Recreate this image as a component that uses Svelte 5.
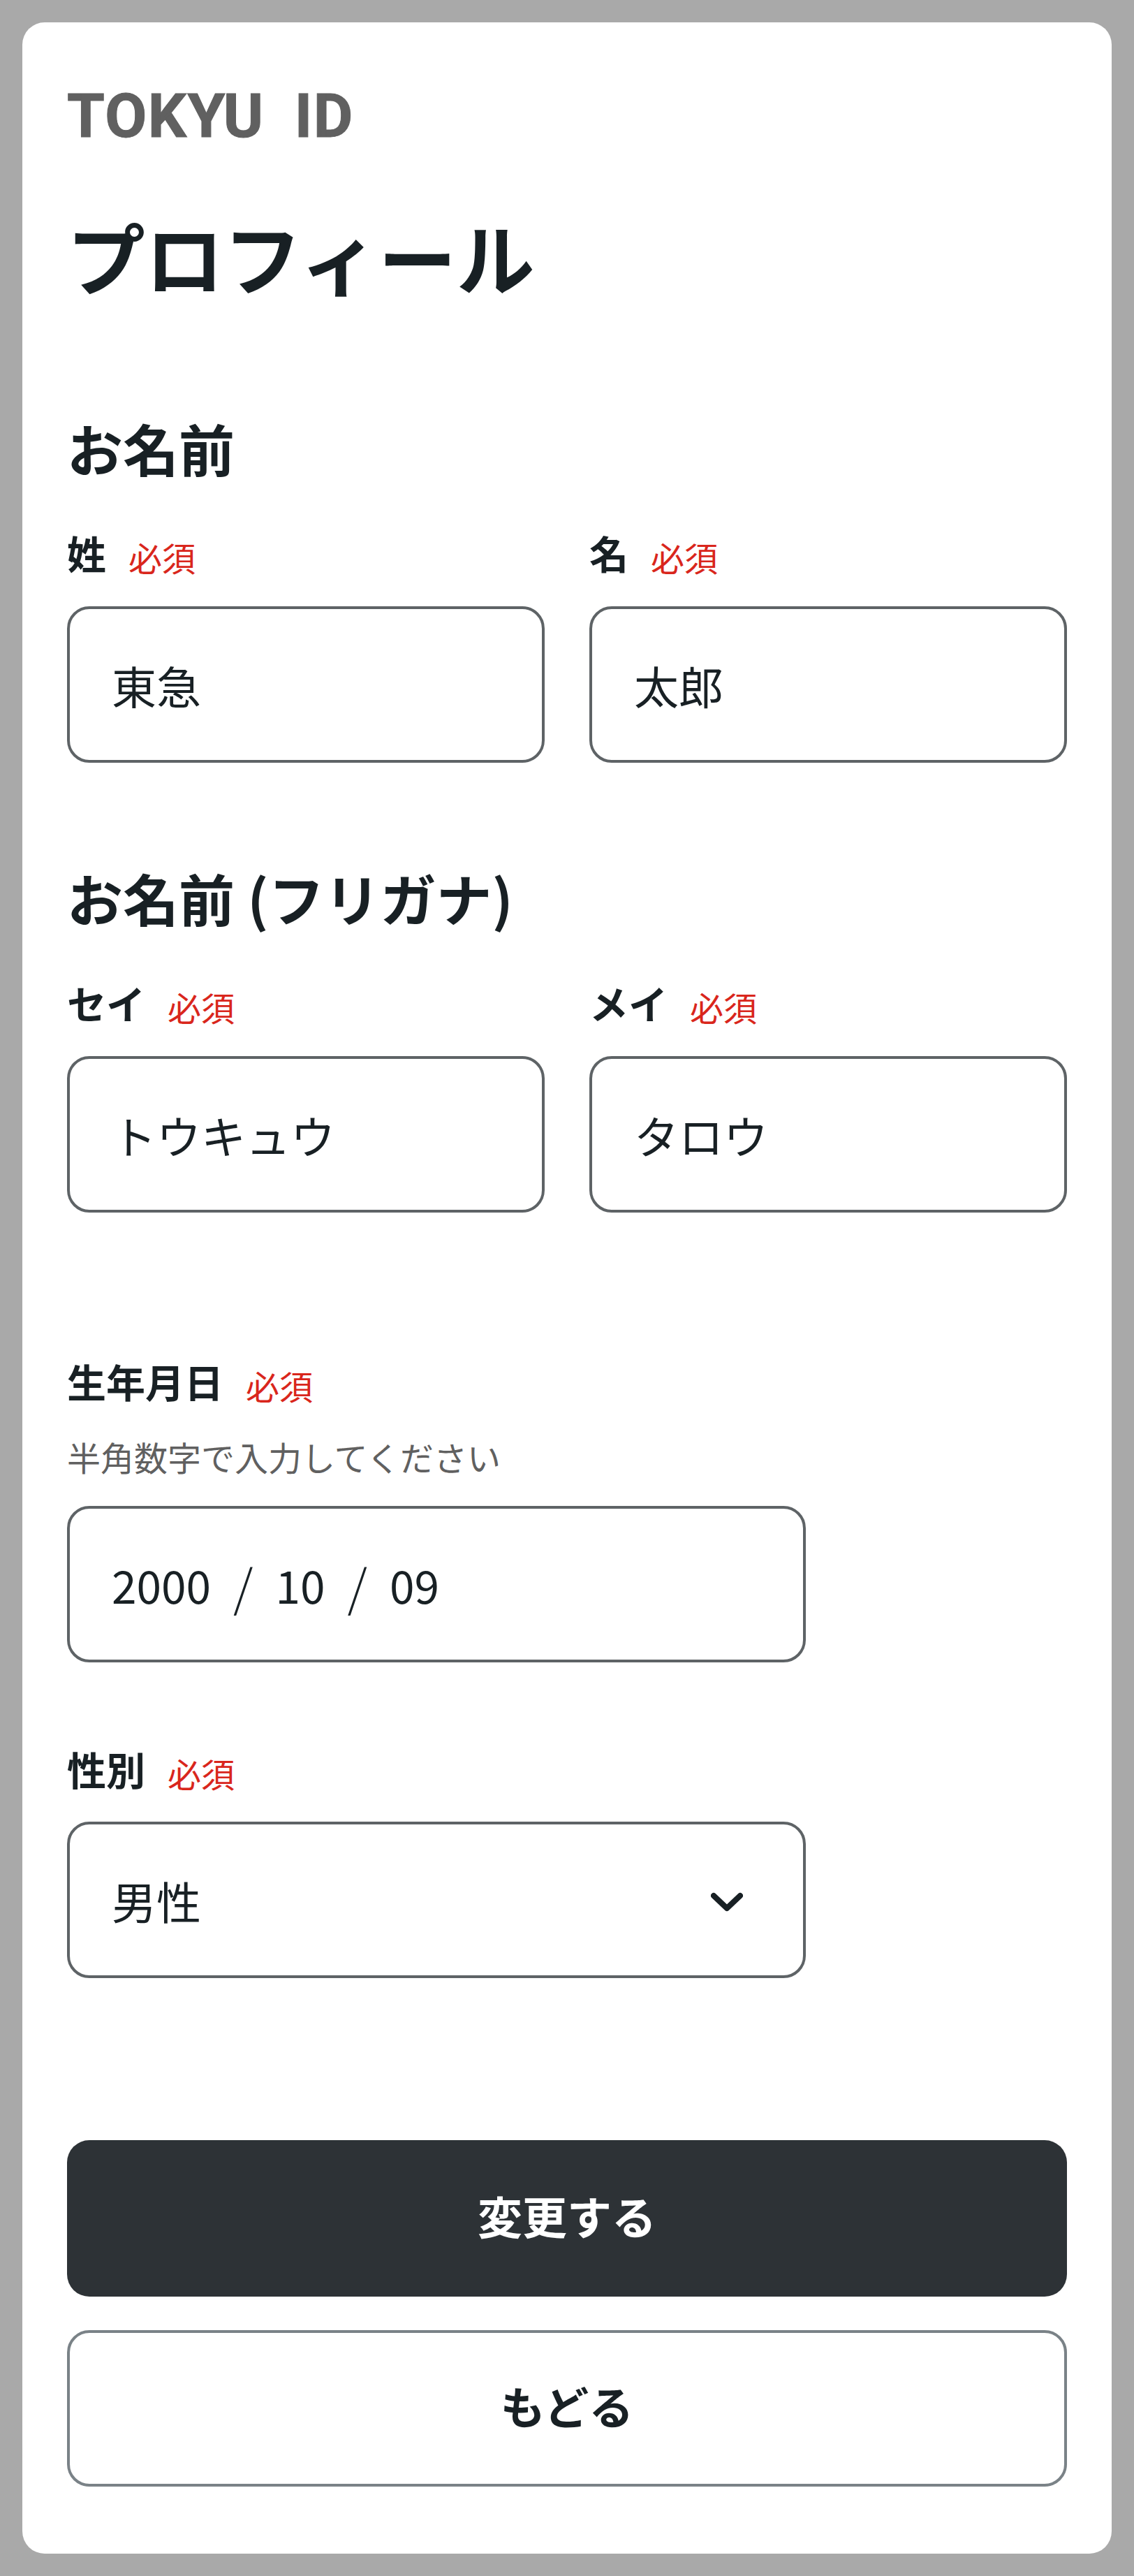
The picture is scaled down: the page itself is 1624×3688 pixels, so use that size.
<script>
  const req = '必須';
</script>

<div class="card">
  <div class="logo">TOKYU ID</div>
  <h1>プロフィール</h1>

  <h2 class="first">お名前</h2>
  <div class="row">
    <div class="field">
      <div class="label"><b>姓</b><span>{req}</span></div>
      <input class="box" value="東急" />
    </div>
    <div class="field">
      <div class="label"><b>名</b><span>{req}</span></div>
      <input class="box" value="太郎" />
    </div>
  </div>

  <h2>お名前 (フリガナ)</h2>
  <div class="row">
    <div class="field">
      <div class="label"><b>セイ</b><span>{req}</span></div>
      <input class="box" value="トウキュウ" />
    </div>
    <div class="field">
      <div class="label"><b>メイ</b><span>{req}</span></div>
      <input class="box" value="タロウ" />
    </div>
  </div>

  <div class="label birth"><b>生年月日</b><span>{req}</span></div>
  <div class="hint">半角数字で入力してください</div>
  <div class="box date narrow">
    <span class="y">2000</span><i>/</i><span>10</span><i>/</i><span>09</span>
  </div>

  <div class="label gender"><b>性別</b><span>{req}</span></div>
  <div class="select narrow">
    <select class="box">
      <option>男性</option>
      <option>女性</option>
    </select>
    <svg width="46" height="28" viewBox="0 0 46 28" fill="none" aria-hidden="true">
      <path d="M4 5 L23 23 L42 5" stroke="#182024" stroke-width="8" stroke-linecap="round" stroke-linejoin="round" />
    </svg>
  </div>

  <button class="primary">変更する</button>
  <button class="secondary">もどる</button>
</div>

<style>
  :global(body) {
    margin: 0;
    padding-top: 32px;
    background: #a9a9a9;
    font-family: "Noto Sans CJK JP", "Noto Sans", sans-serif;
    color: #182024;
  }
  .card {
    box-sizing: border-box;
    width: 1560px;
    height: 3624px;
    margin: 0 32px;
    padding: 96px 64px;
    background: #fff;
    border-radius: 32px;
  }
  .logo {
    height: 76px;
    line-height: 76px;
    font-family: Roboto, "Liberation Sans", sans-serif;
    font-weight: 700;
    font-size: 87px;
    letter-spacing: 1.5px;
    word-spacing: 20px;
    color: #606060;
    white-space: nowrap;
    -webkit-text-stroke: 1px #606060;
  }
  h1 {
    margin: 82px 0 0;
    font-size: 112px;
    line-height: 160px;
    font-weight: 700;
  }
  h2 {
    margin: 136px 0 0;
    font-size: 80px;
    line-height: 112px;
    font-weight: 700;
  }
  h2.first {
    margin-top: 138px;
  }
  .row {
    display: grid;
    grid-template-columns: 684px 684px;
    column-gap: 64px;
    margin-top: 59px;
  }
  .label {
    display: flex;
    align-items: center;
    gap: 32px;
    height: 72px;
    margin-bottom: 41px;
  }
  .label b {
    font-size: 56px;
    font-weight: 700;
    line-height: 72px;
  }
  .label span {
    font-size: 48px;
    line-height: 72px;
    color: #d9261c;
    position: relative;
    top: 6px;
  }
  .box {
    display: block;
    box-sizing: border-box;
    width: 100%;
    height: 224px;
    margin: 0;
    padding: 0 60px;
    border: 4px solid #5e6366;
    border-radius: 32px;
    background: #fff;
    font-family: inherit;
    font-size: 64px;
    color: #182024;
    outline: none;
  }
  .narrow {
    width: 1058px;
  }
  .birth {
    margin-top: 205px;
    margin-bottom: 36px;
  }
  .hint {
    height: 72px;
    line-height: 72px;
    font-size: 48px;
    color: #606060;
    margin-bottom: 35px;
  }
  .date {
    display: flex;
    align-items: center;
    gap: 32px;
  }
  .date i {
    font-style: normal;
    font-size: 72px;
    font-weight: 300;
  }
  .gender {
    margin-top: 116px;
    margin-bottom: 40px;
  }
  .select {
    position: relative;
  }
  .select select {
    appearance: none;
    -webkit-appearance: none;
  }
  .select svg {
    position: absolute;
    right: 90px;
    top: 101px;
  }
  button {
    display: block;
    box-sizing: border-box;
    width: 100%;
    height: 224px;
    padding: 0 0 10px;
    border-radius: 32px;
    font-family: inherit;
    font-size: 64px;
    font-weight: 700;
  }
  .primary {
    margin-top: 232px;
    background: #2d3236;
    border: none;
    color: #fff;
  }
  .secondary {
    margin-top: 48px;
    background: #fff;
    border: 4px solid #7a8287;
    color: #182024;
  }
</style>
